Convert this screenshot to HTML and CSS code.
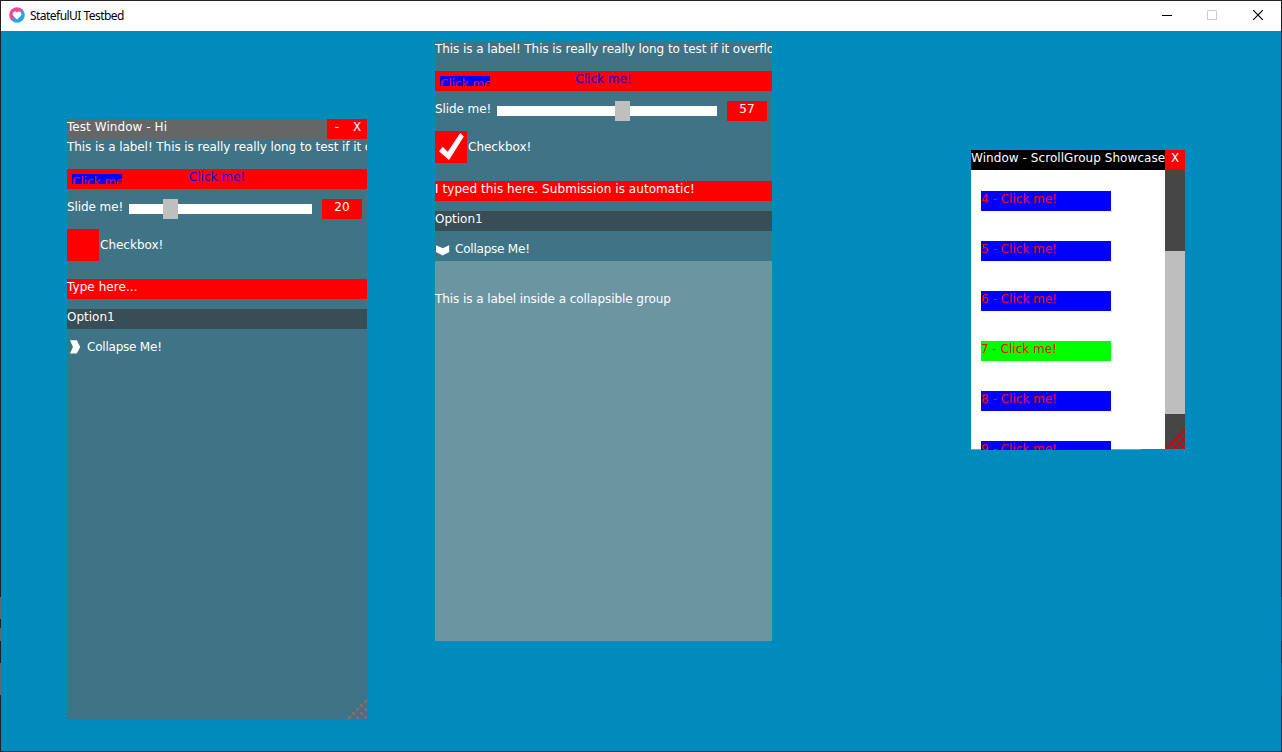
FILE: index.html
```html
<!DOCTYPE html>
<html lang="en">
<head>
<meta charset="utf-8">
<title>StatefulUI Testbed</title>
<link rel="stylesheet" href="styles.css">
</head>
<body>
<div class="app">
  <header class="titlebar">
    <svg class="logo" width="16" height="16" viewBox="0 0 16 16">
      <defs><linearGradient id="ring" x1="0.15" y1="0.1" x2="0.85" y2="0.9"><stop offset="0.46" stop-color="#ea4a98"/><stop offset="0.56" stop-color="#27a8e0"/></linearGradient></defs>
      <circle cx="8" cy="8" r="7.8" fill="url(#ring)"/>
      <path fill="#fff" d="M8 12.6 4.6 9.3C2.9 7.5 3.7 4.4 5.9 4.4c1 0 1.7.5 2.1 1.2.4-.7 1.1-1.2 2.1-1.2 2.2 0 3 3.1 1.3 4.9z"/>
    </svg>
    <span class="caption">StatefulUI Testbed</span>
    <div class="controls">
      <svg width="46" height="30" viewBox="0 0 46 30"><path d="M18 14.5h10" stroke="#000"/></svg>
      <svg width="46" height="30" viewBox="0 0 46 30"><path d="M17.5 9.5h9v9h-9z" fill="none" stroke="#ccc"/></svg>
      <svg width="46" height="30" viewBox="0 0 46 30"><path d="M17.2 9.2l9.6 9.6M26.8 9.2l-9.6 9.6" stroke="#000" stroke-width="1.2"/></svg>
    </div>
  </header>
  <main class="desktop">
    <section class="window window-test">
      <div class="window-title gray"><span class="title-text">Test Window - Hi</span><span class="title-button">-</span><span class="title-button">X</span></div>
      <div class="panel">
        <div class="row label">This is a label! This is really really long to test if it overflows</div>
        <div class="row button-row"><div class="mini-button"><span>Click me!</span></div><div class="click">Click me!</div></div>
        <div class="row slider-row"><span class="slider-label">Slide me!</span><div class="track"><i class="thumb" style="margin-left:34px"></i></div><span class="value">20</span></div>
        <div class="check-row"><i class="check"></i><span>Checkbox!</span></div>
        <div class="row input">Type here...</div>
        <div class="row select">Option1</div>
        <div class="row collapse"><svg width="20" height="20" viewBox="0 0 20 20"><path fill="#fff" d="M3 1.3h6.8l3.4 6.6-3.4 6.6H3L6 7.9z"/></svg><span>Collapse Me!</span></div>
      </div>
      <svg class="grip" width="20" height="20" fill="#76706f"><path d="M17 1h3v3h-3zM13 5h3v3h-3zM9 9h3v3H9zM17 9h3v3h-3zM5 13h3v3H5zM13 13h3v3h-3zM1 17h3v3H1zM9 17h3v3H9zM17 17h3v3h-3z"/></svg>
    </section>
    <section class="window window-form">
      <div class="panel">
        <div class="row label">This is a label! This is really really long to test if it overflows</div>
        <div class="row button-row"><div class="mini-button"><span>Click me!</span></div><div class="click blended">Click me!</div></div>
        <div class="row slider-row"><span class="slider-label">Slide me!</span><div class="track"><i class="thumb" style="margin-left:118px"></i></div><span class="value">57</span></div>
        <div class="check-row"><i class="check"><svg width="32" height="32" viewBox="0 0 32 32"><path fill="#fff" d="M25.2 2l3.6 3.5L14 29 4 20.2l3.7-4.4 5 5z"/></svg></i><span>Checkbox!</span></div>
        <div class="row input">I typed this here. Submission is automatic!</div>
        <div class="row select">Option1</div>
        <div class="row collapse"><svg width="20" height="20" viewBox="0 0 20 20"><path fill="#fff" d="M1 4.3l6.8 3 6.4-3v6.6l-6.5 3.7L1 10.9z"/></svg><span>Collapse Me!</span></div>
        <div class="group">This is a label inside a collapsible group</div>
      </div>
    </section>
    <section class="window window-scroll">
      <div class="window-title black"><span class="title-text">Window - ScrollGroup Showcase</span><span class="title-button">X</span></div>
      <div class="scroll-body">
        <div class="list">
          <div class="item">4 - Click me!</div>
          <div class="item">5 - Click me!</div>
          <div class="item">6 - Click me!</div>
          <div class="item hover">7 - Click me!</div>
          <div class="item">8 - Click me!</div>
          <div class="item">9 - Click me!</div>
        </div>
        <div class="scrollbar"><i class="scroll-thumb"></i></div>
      </div>
      <svg class="grip" width="20" height="20" fill="#d90000"><path d="M17 1h3v3h-3zM13 5h3v3h-3zM9 9h3v3H9zM17 9h3v3h-3zM5 13h3v3H5zM13 13h3v3h-3zM1 17h3v3H1zM9 17h3v3H9zM17 17h3v3h-3z"/></svg>
    </section>
  </main>
</div>
</body>
</html>
```
FILE: styles.css
```css
* { box-sizing: border-box; }
body { margin: 0; font: 12px/14px "DejaVu Sans", sans-serif; color: #fff; }
svg { display: block; }
.app { width: 1282px; height: 752px; padding: 1px; display: flex; flex-direction: column; overflow: hidden;
  background:
    linear-gradient(#666, #666) 0 597px / 1px 22px no-repeat,
    linear-gradient(#666, #666) 0 628px / 1px 13px no-repeat,
    linear-gradient(#666, #666) 0 663px / 1px 32px no-repeat,
    linear-gradient(#40474b, #40474b) 100% 597px / 1px 44px no-repeat,
    linear-gradient(#40474b, #40474b) 100% 663px / 1px 33px no-repeat,
    #222327; }
.titlebar { height: 30px; flex: none; background: #fff; color: #000; display: flex; padding-left: 8px; }
.logo { margin: 6px 5px 0 0; }
.caption { font: 12px/30px "Noto Sans", "Open Sans", sans-serif; letter-spacing: -0.54px; white-space: nowrap; }
.controls { margin: 0 -1px 0 auto; display: flex; }
.desktop { flex: 1; background: #008bbd; position: relative; }
.window { position: absolute; white-space: nowrap; }
.window-test { left: 66px; top: 88px; width: 300px; height: 600px; display: flex; flex-direction: column; }
.window-form { left: 434px; top: 10px; width: 337px; height: 600px; display: flex; }
.window-scroll { left: 970px; top: 119px; width: 214px; height: 299px; }
.window-title { height: 20px; flex: none; display: flex; }
.gray { background: #666; }
.black { background: #000; }
.title-text { flex: 1; min-width: 0; padding-top: 1px; overflow: hidden; letter-spacing: 0.06px; }
.title-button { width: 20px; padding-top: 1px; text-align: center; background: #f00; }
.panel { flex: 1; min-width: 0; background: #3f7487; display: flex; flex-direction: column; }
.row { height: 20px; flex: none; padding-top: 1px; margin-bottom: 10px; }
.label { overflow: hidden; letter-spacing: -0.07px; }
.button-row { background: #f00; display: grid; }
.button-row > * { grid-area: 1 / 1; }
.mini-button { margin: 4px 0 0 5px; width: 50px; height: 10px; overflow: hidden; background: #00f; color: #f00; padding-top: 1px; }
.click { color: #00f; text-align: center; }
.blended { color: #4000bf; text-shadow: 0 0 0 #4000bf; }
.slider-row { display: flex; padding: 0 5px 0 0; }
.slider-label { width: 62px; padding-top: 1px; letter-spacing: -0.08px; }
.track { flex: 1; height: 10px; margin-top: 5px; background: #fff; }
.thumb { display: block; width: 15px; height: 20px; transform: translateY(-5px); background: #bfbfbf; }
.value { width: 40px; margin-left: 10px; padding-top: 1px; text-align: center; background: #f00; }
.check-row { height: 32px; flex: none; display: flex; margin-bottom: 18px; }
.check-row span { padding: 9px 0 0 1px; }
.check { width: 32px; background: #f00; }
.input { background: #f00; letter-spacing: 0.06px; }
.select { background: #384d55; }
.collapse { display: flex; padding: 0; margin: 0; }
.collapse span { padding-top: 1px; letter-spacing: -0.22px; }
.group { flex: 1; background: #6c95a2; padding-top: 31px; letter-spacing: -0.06px; }
.grip { position: absolute; right: 0; bottom: 0; }
.scroll-body { display: flex; height: 279px; }
.list { width: 194px; height: 280px; padding: 21px 10px 0; overflow: hidden; background: linear-gradient(#fff, #fff) 0 0 / 100% 279px no-repeat, linear-gradient(#52b1d3, #52b1d3) 0 279px / 170px 1px no-repeat; }
.item { width: 130px; height: 20px; margin-bottom: 30px; padding-top: 1px; background: #00f; color: #f00; }
.hover { background: #0f0; }
.scrollbar { width: 20px; padding-top: 81px; background: #464646; }
.scroll-thumb { display: block; height: 163px; background: #bebebe; }
```
